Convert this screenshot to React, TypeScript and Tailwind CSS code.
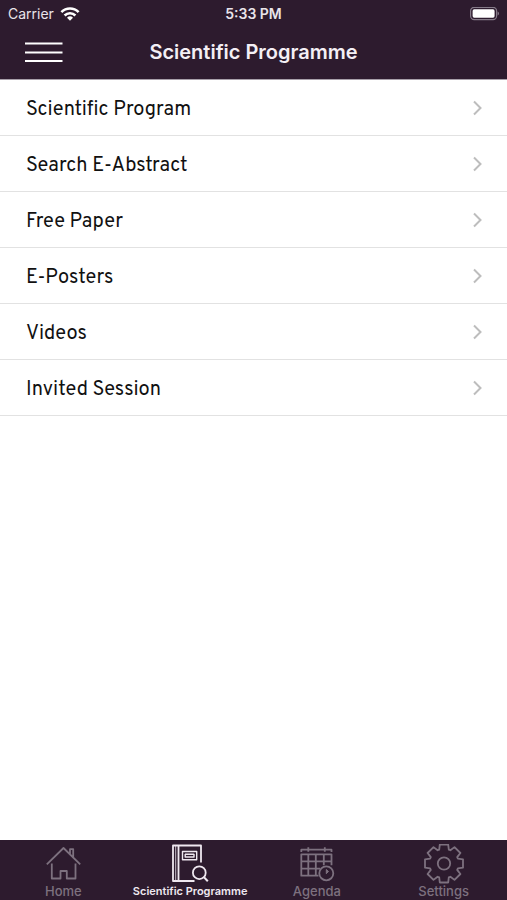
import type { ReactNode } from 'react'

const menuItems = [
    'Scientific Program',
    'Search E-Abstract',
    'Free Paper',
    'E-Posters',
    'Videos',
    'Invited Session',
]

function TabIcon({ children }: { children: ReactNode }) {
    return (
        <svg
            className="size-10"
            viewBox="0 0 40 40"
            fill="none"
            stroke="currentColor"
            strokeWidth="1.8"
            strokeLinejoin="round"
            aria-hidden="true"
        >
            {children}
        </svg>
    )
}

function HomeIcon() {
    return (
        <TabIcon>
            <path d="M3.8 20.3 20.5 4l16.7 16.3M27 10V5.2h3.2v8" />
            <path d="M8.8 19.5v15h8.7V27h6.3v7.5h8.7v-15" />
        </TabIcon>
    )
}

function ProgrammeIcon() {
    return (
        <TabIcon>
            <path d="M24.5 37H3V1.5h28v17M8.5 1.5V37" />
            <path d="M5.7 1.5V37" strokeWidth="0.8" />
            <path d="M12.5 7.5h14.2v8.2H12.5zM15 10.3h9.2M15 13h9.2M15.2 10v3.4M24 10v3.4" strokeWidth="1.4" />
            <circle cx="29.3" cy="28.7" r="6.4" />
            <path d="m34 33.3 3.8 3.9" strokeWidth="2" />
        </TabIcon>
    )
}

function AgendaIcon() {
    return (
        <TabIcon>
            <path d="M4.3 8V5.7h30.2V8M11.3 3.3v4.4M27.8 3.3v4.4" />
            <path d="M21.5 31.7H4.3V10.3h30.2v11M4.3 17.4h30.2M4.3 24.6H23M11.3 10.3v21.4M18.8 10.3v21.4M26.8 10.3v11" />
            <circle cx="29.3" cy="29.3" r="7" />
            <path d="M29.3 25.5v4.2l2.2-2.2z" fill="currentColor" strokeWidth="1" />
        </TabIcon>
    )
}

function SettingsIcon() {
    return (
        <TabIcon>
            <g transform="translate(20 19.5)">
                <path d="M-4.2-19H4.2L4.8-13.9L6.4-13.2L10.5-16.4L16.4-10.5L13.2-6.4L13.9-4.8L19-4.2V4.2L13.9 4.8L13.2 6.4L16.4 10.5L10.5 16.4L6.4 13.2L4.8 13.9L4.2 19H-4.2L-4.8 13.9L-6.4 13.2L-10.5 16.4L-16.4 10.5L-13.2 6.4L-13.9 4.8L-19 4.2V-4.2L-13.9-4.8L-13.2-6.4L-16.4-10.5L-10.5-16.4L-6.4-13.2L-4.8-13.9Z" />
                <circle r="6.2" />
            </g>
        </TabIcon>
    )
}

const tabs = [
    { label: 'Home', Icon: HomeIcon },
    { label: 'Scientific Programme', Icon: ProgrammeIcon },
    { label: 'Agenda', Icon: AgendaIcon },
    { label: 'Settings', Icon: SettingsIcon },
]

function StatusBar() {
    return (
        <div className="grid h-7 grid-cols-3 items-center px-2 text-sm text-[#e9e4ea]">
            <div className="flex items-center gap-1.5">
                <span>Carrier</span>
                <svg className="h-3.5 w-5" viewBox="0 0 20 14" fill="none" stroke="white" strokeWidth="2.6" aria-hidden="true">
                    <path d="M1.4 5.1a12.2 12.2 0 0 1 17.2 0M4.6 8.5a7.6 7.6 0 0 1 10.8 0" />
                    <path d="m10 13.8-3-3a4.3 4.3 0 0 1 6 0z" fill="white" stroke="none" />
                </svg>
            </div>
            <span className="text-center font-semibold">5:33 PM</span>
            <svg className="h-3.5 w-8 justify-self-end" viewBox="0 0 32 14" aria-hidden="true">
                <rect x="3.6" y=".3" width="26" height="12.4" rx="3.6" fill="none" stroke="#857a88" strokeWidth="1.2" />
                <rect x="5.6" y="2.3" width="22" height="8.4" rx="1.6" fill="white" />
                <path d="M30.6 4.5v4q1.4-.6 1.4-2t-1.4-2" fill="#857a88" />
            </svg>
        </div>
    )
}

export default function App() {
    return (
        <div className="flex min-h-screen flex-col bg-white font-['Inter',sans-serif]">
            <header className="border-b border-[#a79fa9] bg-[#2d1b2e] pb-1">
                <StatusBar />
                <div className="grid h-[47px] grid-cols-[64px_1fr_64px] items-center">
                    <button type="button" aria-label="Open menu" className="justify-self-end">
                        <svg className="h-6 w-10" viewBox="0 0 40 24" stroke="white" strokeWidth="2" aria-hidden="true">
                            <path d="M1 3.5h37.5M1 12.5h37.5M1 21h37.5" />
                        </svg>
                    </button>
                    <h1 className="text-center text-xl font-semibold text-[#f4eff5]">
                        Scientific Programme
                    </h1>
                </div>
            </header>

            <main className="flex-1">
                <ul>
                    {menuItems.map((item) => (
                        <li key={item} className="border-b border-[#e2e2e2]">
                            <a
                                href="#"
                                className="flex h-[55px] items-center justify-between pr-6 pl-[26px] font-['Overpass','Roboto',sans-serif] text-xl font-[450] text-[#111111]"
                            >
                                <span className="pt-1">{item}</span>
                                <svg className="h-4 w-3" viewBox="0 0 12 16" fill="none" stroke="#bdbdbd" strokeWidth="2" aria-hidden="true">
                                    <path d="m3 1.5 6.5 6.5L3 14.5" />
                                </svg>
                            </a>
                        </li>
                    ))}
                </ul>
            </main>

            <nav className="grid h-[60px] grid-cols-4 bg-[#2d1b2e] pt-1">
                {tabs.map(({ label, Icon }) => (
                    <button
                        key={label}
                        type="button"
                        className={`flex flex-col items-center leading-[14px] whitespace-nowrap ${
                            label === 'Scientific Programme'
                                ? 'text-[11px] font-semibold text-[#efe8f0]'
                                : 'text-[13px] font-medium text-[#7d717f]'
                        }`}
                    >
                        <Icon />
                        {label}
                    </button>
                ))}
            </nav>
        </div>
    )
}
